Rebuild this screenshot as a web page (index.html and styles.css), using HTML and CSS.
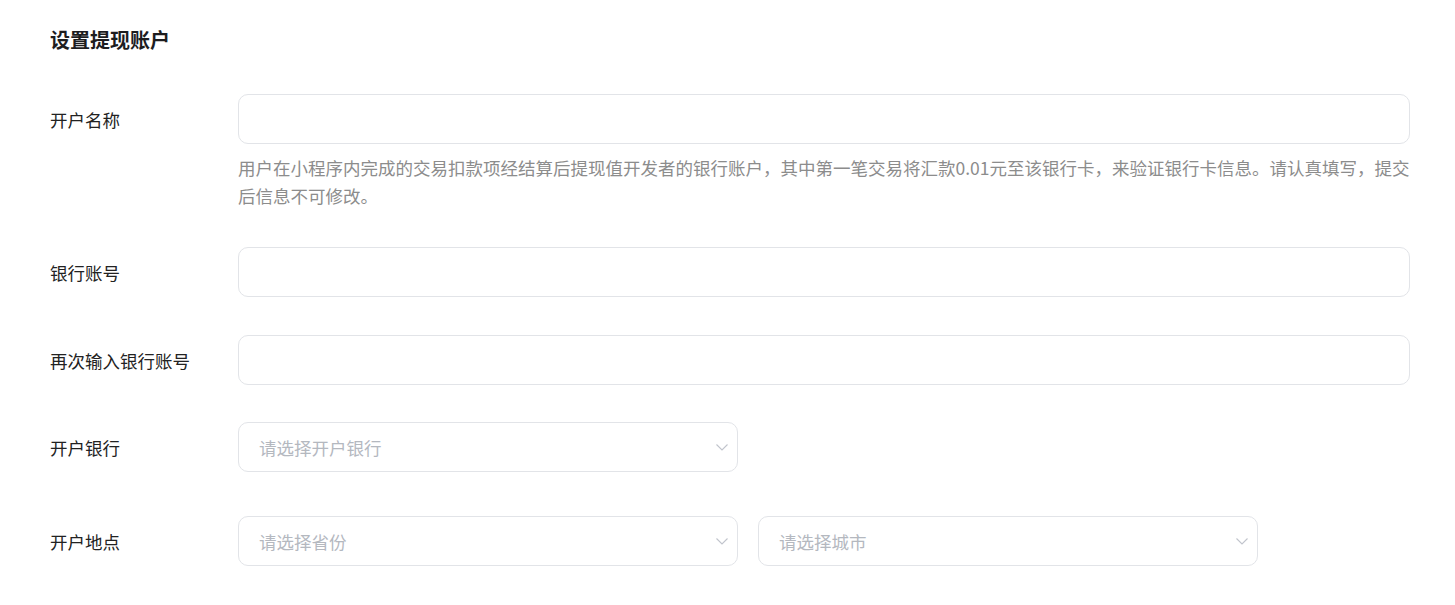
FILE: index.html
```html
<!DOCTYPE html>
<html lang="zh-CN">
<head>
<meta charset="UTF-8">
<meta name="viewport" content="width=device-width, initial-scale=1.0">
<title>设置提现账户</title>
<link rel="stylesheet" href="styles.css">
</head>
<body>
<div class="page">
  <div class="page-title">设置提现账户</div>

  <div class="form">
    <div class="form-item">
      <label class="form-label">开户名称</label>
      <div class="form-content">
        <input class="text-input" type="text">
        <div class="form-tip">用户在小程序内完成的交易扣款项经结算后提现值开发者的银行账户，其中第一笔交易将汇款0.01元至该银行卡，来验证银行卡信息。请认真填写，提交后信息不可修改。</div>
      </div>
    </div>

    <div class="form-item item-account">
      <label class="form-label">银行账号</label>
      <div class="form-content">
        <input class="text-input" type="text">
      </div>
    </div>

    <div class="form-item item-repeat">
      <label class="form-label">再次输入银行账号</label>
      <div class="form-content">
        <input class="text-input" type="text">
      </div>
    </div>

    <div class="form-item item-bank">
      <label class="form-label">开户银行</label>
      <div class="form-content">
        <div class="select">
          <span class="select-placeholder">请选择开户银行</span>
          <svg class="select-arrow" width="12" height="7" viewBox="0 0 12 7"><path d="M0.5 0.5 L6 6 L11.5 0.5" fill="none" stroke="#c0c4cc" stroke-width="1.1"/></svg>
        </div>
      </div>
    </div>

    <div class="form-item item-place">
      <label class="form-label">开户地点</label>
      <div class="form-content select-group">
        <div class="select">
          <span class="select-placeholder">请选择省份</span>
          <svg class="select-arrow" width="12" height="7" viewBox="0 0 12 7"><path d="M0.5 0.5 L6 6 L11.5 0.5" fill="none" stroke="#c0c4cc" stroke-width="1.1"/></svg>
        </div>
        <div class="select">
          <span class="select-placeholder">请选择城市</span>
          <svg class="select-arrow" width="12" height="7" viewBox="0 0 12 7"><path d="M0.5 0.5 L6 6 L11.5 0.5" fill="none" stroke="#c0c4cc" stroke-width="1.1"/></svg>
        </div>
      </div>
    </div>
  </div>
</div>
</body>
</html>
```

FILE: styles.css
```css
/* styles.css */
body {
  margin: 0;
  padding: 0;
  background-color: #fff;
  color: #303133;
  font-family: "Noto Sans CJK SC", "Noto Sans", sans-serif;
}

.page {
  padding: 26px 45px 0 50px;
}

.page-title {
  font-size: 20px;
  line-height: 28px;
  font-weight: bold;
  color: #1d1d1f;
}

.form {
  margin-top: 40px;
}

.form-item {
  display: flex;
  align-items: flex-start;
}

.item-account { margin-top: 37px; }
.item-repeat { margin-top: 38px; }
.item-bank { margin-top: 37px; }
.item-place { margin-top: 44px; }

.form-label {
  width: 188px;
  flex-shrink: 0;
  font-size: 17.5px;
  line-height: 48px;
  padding-top: 2px;
  color: #222;
}

.form-content {
  flex: 1;
}

.text-input {
  display: block;
  width: 100%;
  height: 50px;
  box-sizing: border-box;
  border: 1px solid #e2e4e8;
  border-radius: 10px;
  outline: none;
  padding: 0 19px;
  font-size: 17.5px;
  font-family: inherit;
}

.form-tip {
  margin-top: 10px;
  font-size: 17.5px;
  line-height: 28px;
  color: #8c8c8c;
}

.select-group {
  display: flex;
  gap: 20px;
}

.select {
  width: 500px;
  height: 50px;
  box-sizing: border-box;
  border: 1px solid #e2e4e8;
  border-radius: 10px;
  padding: 0 9px 0 20px;
  display: flex;
  align-items: center;
  justify-content: space-between;
}

.select-placeholder {
  font-size: 17.5px;
  color: #b4b8bf;
}

.select-arrow {
  display: block;
}
```
